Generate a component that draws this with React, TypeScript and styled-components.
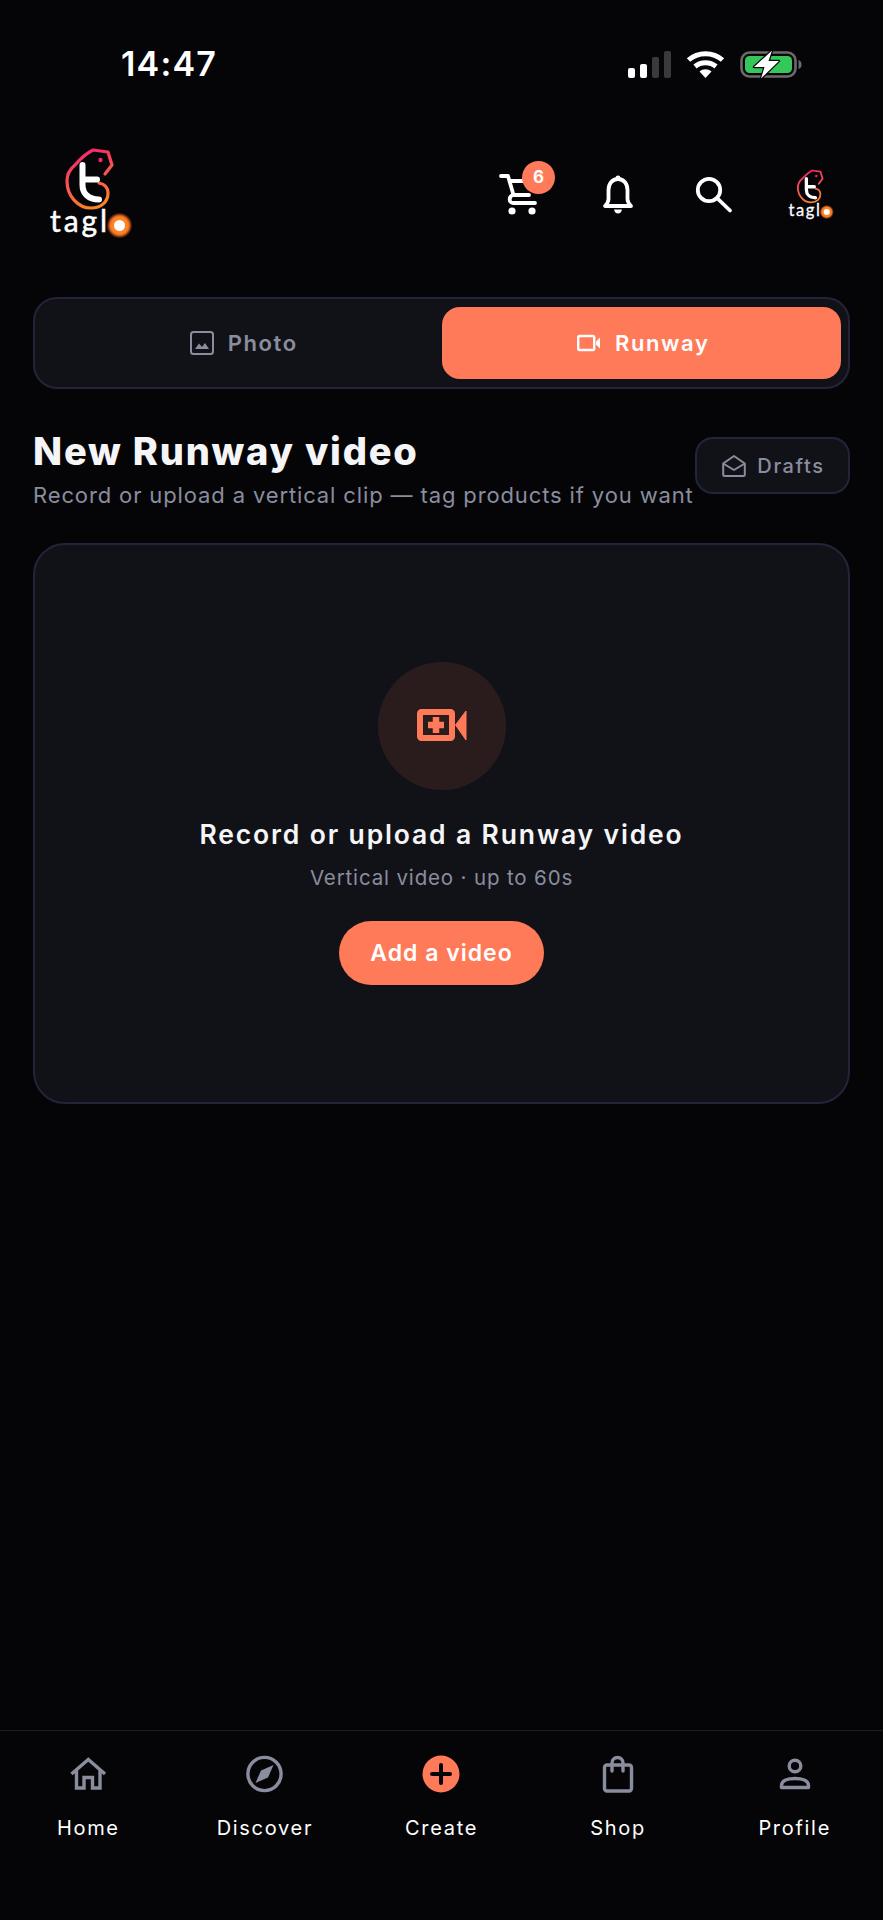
import React from 'react';
import styled, { createGlobalStyle } from 'styled-components';

const ACCENT = '#ff7a59';
const MUTED = '#8a8d9e';
const SURFACE = '#111218';
const LINE = '#23243a';

const GlobalStyle = createGlobalStyle`
  * {
    box-sizing: border-box;
  }
  html,
  body {
    margin: 0;
    background: #050508;
    font-family: Inter, "Liberation Sans", sans-serif;
  }
`;

const Logo: React.FC<{ width: number; uid: string }> = ({ width, uid }) => (
  <svg width={width} height={width * 1.1} viewBox="0 0 100 110" fill="none" style={{ flexShrink: 0 }}>
    <defs>
      <linearGradient id={uid} x1="0.3" y1="0" x2="0.6" y2="1">
        <stop offset="0" stopColor="#f5246f" />
        <stop offset="0.55" stopColor="#fb5a4c" />
        <stop offset="1" stopColor="#fb8526" />
      </linearGradient>
      <radialGradient id={`${uid}-glow`}>
        <stop offset="0.62" stopColor="#fb8526" />
        <stop offset="0.75" stopColor="#e8661c" />
        <stop offset="1" stopColor="#a8481a" stopOpacity="0" />
      </radialGradient>
    </defs>
    <path
      d="M65 34 L72 25 L68 12 L53 10 C47 13 41 18 35 25 C30 29 27 34 27 41 C27 56 38 68 51 68 C61 68 68 62 68 53 C68 47 64 44 59 43"
      stroke={`url(#${uid})`}
      strokeWidth="3.2"
      strokeLinecap="round"
      strokeLinejoin="round"
    />
    <circle cx="60.5" cy="20" r="2.2" fill="#f5246f" />
    <path
      d="M42.5 25 V45 C42.5 53 48 59.5 59 59.5 M42.5 39.5 H57"
      stroke="#fff"
      strokeWidth="6"
      strokeLinecap="round"
    />
    <text
      x="10"
      y="92"
      fontFamily="Lato, sans-serif"
      fontSize="30"
      fontWeight="400"
      textLength="57"
      lengthAdjust="spacing"
      fill="#fff"
      stroke="#fff"
      strokeWidth="0.5"
    >
      tagl
    </text>
    <circle cx="79.5" cy="85.5" r="13" fill={`url(#${uid}-glow)`} />
    <circle cx="79.5" cy="85.5" r="5.5" fill="#fff" />
  </svg>
);

const SignalIcon = () => (
  <svg width="43" height="28" viewBox="0 0 43 28">
    <rect x="0" y="18" width="7" height="10" rx="2" fill="#fff" />
    <rect x="12" y="14" width="7" height="14" rx="2" fill="#fff" />
    <rect x="24" y="7" width="7" height="21" rx="2" fill="#3a3a3c" />
    <rect x="36" y="1" width="7" height="27" rx="2" fill="#3a3a3c" />
  </svg>
);

const WifiIcon = () => (
  <svg width="39" height="28" viewBox="0 0 39 28" fill="none">
    <path d="M2.5 10 C12 1.5 27 1.5 36.5 10" stroke="#fff" strokeWidth="5" />
    <path d="M9 16.5 C15 11.5 24 11.5 30 16.5" stroke="#fff" strokeWidth="5" />
    <path d="M13.5 21.5 C17 18.5 22 18.5 25.5 21.5 L19.5 28 Z" fill="#fff" />
  </svg>
);

const BatteryIcon = () => (
  <svg width="62" height="29" viewBox="0 0 62 29" fill="none">
    <rect x="1.5" y="2.5" width="54" height="24" rx="8" stroke="#6b6b6e" strokeWidth="2.6" />
    <rect x="5" y="6" width="47" height="17" rx="4.5" fill="#34c759" />
    <path d="M58.5 10 C61 11 61.5 12.5 61.5 14.5 C61.5 16.5 61 18 58.5 19 Z" fill="#6b6b6e" />
    <path
      d="M32 0.5 L14 17 H24.5 L21 28.5 L39 11 H28.5 Z"
      fill="#fff"
      stroke="#050508"
      strokeWidth="2.4"
      paintOrder="stroke"
      strokeLinejoin="round"
    />
  </svg>
);

const CartIcon = () => (
  <svg width="48" height="48" viewBox="0 0 48 48" fill="none" stroke="#fff" strokeWidth="3.8" strokeLinecap="round" strokeLinejoin="round">
    <path d="M3 5 H10 L15.5 24 H31 M12 10 H32" />
    <path d="M15.5 24 C10.5 25 10.5 32 15 32 H37" />
    <circle cx="14" cy="40" r="3.6" fill="#fff" stroke="none" />
    <circle cx="34" cy="40" r="3.6" fill="#fff" stroke="none" />
  </svg>
);

const BellIcon = () => (
  <svg width="48" height="48" viewBox="0 0 48 48" fill="none">
    <path
      d="M24 8 C18 8 14.5 13 14.5 19 V28 C14.5 31 13 33 11 35 H37 C35 33 33.5 31 33.5 28 V19 C33.5 13 30 8 24 8 Z"
      stroke="#fff"
      strokeWidth="3.8"
      strokeLinejoin="round"
    />
    <circle cx="24" cy="7" r="2.4" fill="#fff" />
    <path d="M20 38.5 H28 C27.5 41 26 42.5 24 42.5 C22 42.5 20.5 41 20 38.5 Z" fill="#fff" />
  </svg>
);

const SearchIcon = () => (
  <svg width="48" height="48" viewBox="0 0 48 48" fill="none" stroke="#fff" strokeWidth="3.8" strokeLinecap="round">
    <circle cx="19" cy="19" r="11.2" />
    <path d="M27.5 27.5 L40 39.5" />
  </svg>
);

const PhotoIcon = () => (
  <svg width="24" height="24" viewBox="0 0 24 24" fill="none">
    <rect x="1" y="1" width="22" height="22" rx="2.5" stroke={MUTED} strokeWidth="2" />
    <path d="M5 18 L9 12.5 L12 16 L15 12 L19 18 Z" fill={MUTED} />
  </svg>
);

const VideoIcon = () => (
  <svg width="24" height="24" viewBox="0 0 24 24" fill="none">
    <rect x="1.2" y="5" width="16" height="14" rx="1.5" stroke="#fff" strokeWidth="2.4" />
    <path d="M19 10.5 L23 6.5 V17.5 L19 13.5 Z" fill="#fff" />
  </svg>
);

const EnvelopeIcon = () => (
  <svg width="24" height="24" viewBox="0 0 24 24" fill="none" stroke={MUTED} strokeWidth="2" strokeLinejoin="round">
    <path d="M1.2 9.5 L12 2 L22.8 9.5 V20.5 C22.8 21.5 22 22 21.2 22 H2.8 C2 22 1.2 21.5 1.2 20.5 Z" />
    <path d="M1.2 9.5 L12 16 L22.8 9.5" />
  </svg>
);

const VideoPlusIcon = () => (
  <svg width="50" height="34" viewBox="0 0 50 34" fill="none">
    <rect x="3" y="3" width="32" height="26" rx="1.5" stroke={ACCENT} strokeWidth="6" />
    <path d="M11 16 H27 M19 8 V24" stroke={ACCENT} strokeWidth="6.5" />
    <path d="M38.5 16 L49 2 V31 Z" fill={ACCENT} stroke={ACCENT} strokeLinejoin="round" />
  </svg>
);

const navIcons: Record<string, React.ReactNode> = {
  Home: (
    <svg width="40" height="40" viewBox="0 0 40 40" fill="none" stroke={MUTED} strokeWidth="3.4">
      <path d="M3.5 20 L20.3 5.5 L37 20" />
      <path d="M8.5 16.5 V34 H16 V23.5 H24.5 V34 H32 V16.5" />
    </svg>
  ),
  Discover: (
    <svg width="40" height="40" viewBox="0 0 40 40" fill="none">
      <circle cx="19.5" cy="20" r="16.6" stroke={MUTED} strokeWidth="3.4" />
      <path d="M28.5 11 L23 23.5 L10.5 29 L16 16.5 Z" fill={MUTED} />
    </svg>
  ),
  Create: (
    <svg width="40" height="40" viewBox="0 0 40 40" fill="none">
      <circle cx="20" cy="20" r="18.5" fill={ACCENT} />
      <path d="M11 20 H29 M20 11 V29" stroke="#050508" strokeWidth="4" strokeLinecap="round" />
    </svg>
  ),
  Shop: (
    <svg width="40" height="40" viewBox="0 0 40 40" fill="none" stroke={MUTED} strokeWidth="3.4" strokeLinecap="round">
      <rect x="6.5" y="11" width="27" height="26" rx="2.5" />
      <path d="M14 17 V9 C14 5.5 16.5 3.5 19.5 3.5 C22.5 3.5 25 5.5 25 9 V17" />
    </svg>
  ),
  Profile: (
    <svg width="40" height="40" viewBox="0 0 40 40" fill="none" stroke={MUTED} strokeWidth="3.4" strokeLinejoin="round">
      <circle cx="20" cy="12" r="5.8" />
      <path d="M6.5 33.5 V31.5 C6.5 26.5 13 24.5 20 24.5 C27 24.5 33.5 26.5 33.5 31.5 V33.5 Z" />
    </svg>
  ),
};

const navItems = ['Home', 'Discover', 'Create', 'Shop', 'Profile'];

export default function App() {
  return (
    <>
      <GlobalStyle />
      <Page>
        <StatusBar>
          <Clock>14:47</Clock>
          <StatusIcons>
            <SignalIcon />
            <WifiIcon />
            <BatteryIcon />
          </StatusIcons>
        </StatusBar>

        <Header>
          <Logo width={100} uid="logo-large" />
          <HeaderActions>
            <HeaderButton>
              <CartIcon />
              <Badge>6</Badge>
            </HeaderButton>
            <HeaderButton>
              <BellIcon />
            </HeaderButton>
            <HeaderButton>
              <SearchIcon />
            </HeaderButton>
            <HeaderButton>
              <Logo width={55} uid="logo-small" />
            </HeaderButton>
          </HeaderActions>
        </Header>

        <Content>
          <Tabs>
            <Tab>
              <PhotoIcon />
              Photo
            </Tab>
            <Tab $active>
              <VideoIcon />
              Runway
            </Tab>
          </Tabs>

          <TitleRow>
            <div>
              <Title>New Runway video</Title>
              <Subtitle>Record or upload a vertical clip — tag products if you want</Subtitle>
            </div>
            <DraftsButton>
              <EnvelopeIcon />
              Drafts
            </DraftsButton>
          </TitleRow>

          <UploadCard>
            <IconCircle>
              <VideoPlusIcon />
            </IconCircle>
            <CardTitle>Record or upload a Runway video</CardTitle>
            <CardHint>Vertical video · up to 60s</CardHint>
            <AddButton>Add a video</AddButton>
          </UploadCard>
        </Content>

        <BottomNav>
          {navItems.map((item) => (
            <NavItem key={item}>
              {navIcons[item]}
              <NavLabel>{item}</NavLabel>
            </NavItem>
          ))}
        </BottomNav>
      </Page>
    </>
  );
}

const Page = styled.div`
  display: flex;
  flex-direction: column;
  width: 883px;
  height: 1920px;
  background: #050508;
  overflow: hidden;
`;

const StatusBar = styled.div`
  display: flex;
  justify-content: space-between;
  align-items: center;
  height: 40px;
  margin-top: 44px;
  padding: 0 81px 0 121px;
`;

const Clock = styled.span`
  color: #fff;
  font-size: 34px;
  font-weight: 600;
  line-height: 40px;
  letter-spacing: 1.2px;
`;

const StatusIcons = styled.div`
  display: flex;
  align-items: center;
  gap: 15px;
`;

const Header = styled.header`
  display: flex;
  justify-content: space-between;
  align-items: center;
  height: 110px;
  margin-top: 56px;
  padding: 0 49px 0 40px;
`;

const HeaderActions = styled.div`
  display: flex;
  align-items: center;
  gap: 48px;
`;

const HeaderButton = styled.div`
  position: relative;
  display: flex;
  justify-content: center;
  align-items: center;
  width: 48px;
  height: 48px;
`;

const Badge = styled.span`
  position: absolute;
  top: -10px;
  left: 24px;
  width: 33px;
  height: 33px;
  border-radius: 50%;
  background: ${ACCENT};
  color: #fff;
  font-size: 17px;
  font-weight: 700;
  line-height: 33px;
  text-align: center;
`;

const Content = styled.main`
  display: flex;
  flex-direction: column;
  margin-top: 47px;
  padding: 0 33px;
`;

const Tabs = styled.div`
  display: flex;
  height: 92px;
  padding: 8px 7px;
  border: 2px solid ${LINE};
  border-radius: 24px;
  background: ${SURFACE};
`;

const Tab = styled.div<{ $active?: boolean }>`
  flex: 1;
  display: flex;
  justify-content: center;
  align-items: center;
  gap: 14px;
  padding-left: 4px;
  border-radius: 18px;
  background: ${(props) => (props.$active ? ACCENT : 'transparent')};
  color: ${(props) => (props.$active ? '#fff' : MUTED)};
  font-size: 22px;
  font-weight: 600;
  letter-spacing: 1.6px;
`;

const TitleRow = styled.div`
  display: flex;
  justify-content: space-between;
  align-items: flex-start;
  margin-top: 40px;
`;

const Title = styled.h1`
  margin: 0;
  color: #f5f5f7;
  font-size: 38px;
  font-weight: 800;
  line-height: 44px;
  letter-spacing: 1.8px;
`;

const Subtitle = styled.p`
  margin: 8px 0 0;
  color: ${MUTED};
  font-size: 22px;
  line-height: 28px;
  letter-spacing: 0.87px;
  white-space: nowrap;
`;

const DraftsButton = styled.div`
  display: flex;
  justify-content: center;
  align-items: center;
  gap: 11px;
  flex-shrink: 0;
  width: 155px;
  height: 57px;
  margin-top: 8px;
  padding-left: 2px;
  border: 2px solid ${LINE};
  border-radius: 18px;
  background: ${SURFACE};
  color: ${MUTED};
  font-size: 20px;
  font-weight: 500;
  letter-spacing: 1.6px;
`;

const UploadCard = styled.section`
  display: flex;
  flex-direction: column;
  align-items: center;
  height: 561px;
  margin-top: 34px;
  padding-top: 117px;
  border: 2px solid ${LINE};
  border-radius: 32px;
  background: ${SURFACE};
`;

const IconCircle = styled.div`
  display: flex;
  justify-content: center;
  align-items: center;
  width: 128px;
  height: 128px;
  border-radius: 50%;
  background: #2a1c1c;
`;

const CardTitle = styled.h2`
  margin: 27px 0 0;
  color: #f5f5f7;
  font-size: 26.5px;
  font-weight: 600;
  line-height: 34px;
  letter-spacing: 1.85px;
`;

const CardHint = styled.p`
  margin: 13px 0 0;
  color: ${MUTED};
  font-size: 20.5px;
  line-height: 28px;
  letter-spacing: 0.85px;
`;

const AddButton = styled.div`
  display: flex;
  justify-content: center;
  align-items: center;
  width: 205px;
  height: 64px;
  margin-top: 29px;
  border-radius: 32px;
  background: ${ACCENT};
  color: #fff;
  font-size: 23px;
  font-weight: 600;
  letter-spacing: 1px;
`;

const BottomNav = styled.nav`
  display: grid;
  grid-template-columns: repeat(5, 1fr);
  height: 190px;
  margin-top: auto;
  padding-top: 23px;
  border-top: 1px solid #1c1c28;
`;

const NavItem = styled.div`
  display: flex;
  flex-direction: column;
  align-items: center;
  gap: 21px;
`;

const NavLabel = styled.span`
  color: #fff;
  font-size: 20px;
  font-weight: 400;
  line-height: 26px;
  letter-spacing: 1.7px;
`;
